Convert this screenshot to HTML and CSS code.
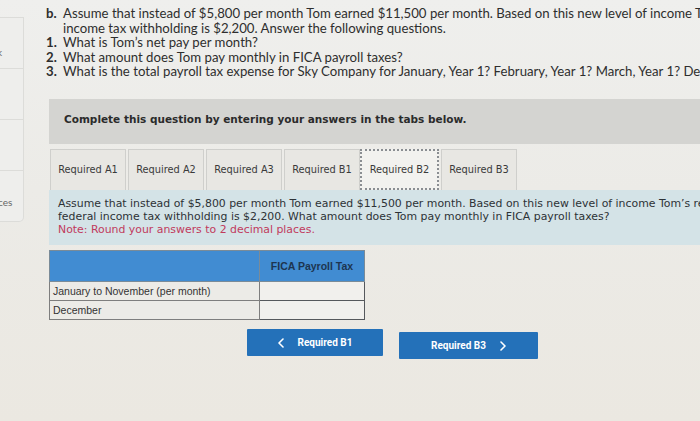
FILE: index.html
```html
<!DOCTYPE html>
<html>
<head>
<meta charset="utf-8">
<link rel="stylesheet" href="styles.css">
</head>
<body>
<div class="page">
  <aside class="side">
    <div class="side-item"><span class="side-x">k</span></div>
    <div class="side-item"></div>
    <div class="side-item"></div>
    <div class="side-item side-last"><span class="side-ces">ces</span></div>
  </aside>
  <main class="main">
    <div class="question">
      <div class="qrow"><span class="mark">b.</span><span class="qtext"><span class="line">Assume that instead of $5,800 per month Tom earned $11,500 per month. Based on this new level of income Tom's federal</span><span class="line">income tax withholding is $2,200. Answer the following questions.</span></span></div>
      <div class="qrow"><span class="mark num">1.</span><span class="qtext">What is Tom’s net pay per month?</span></div>
      <div class="qrow"><span class="mark num">2.</span><span class="qtext">What amount does Tom pay monthly in FICA payroll taxes?</span></div>
      <div class="qrow"><span class="mark num">3.</span><span class="qtext line">What is the total payroll tax expense for Sky Company for January, Year 1? February, Year 1? March, Year 1? December, Year 1?</span></div>
    </div>

    <div class="banner">Complete this question by entering your answers in the tabs below.</div>

    <div class="tabs">
      <div class="tab">Required A1</div>
      <div class="tab">Required A2</div>
      <div class="tab">Required A3</div>
      <div class="tab">Required B1</div>
      <div class="tab active">Required B2</div>
      <div class="tab">Required B3</div>
    </div>

    <div class="prompt">
      <p class="line">Assume that instead of $5,800 per month Tom earned $11,500 per month. Based on this new level of income Tom’s regular</p>
      <p class="line">federal income tax withholding is $2,200. What amount does Tom pay monthly in FICA payroll taxes?</p>
      <p class="note">Note: Round your answers to 2 decimal places.</p>
    </div>

    <table class="grid">
      <tr class="head">
        <th class="label-col"></th>
        <th class="val-col">FICA Payroll Tax</th>
      </tr>
      <tr>
        <td class="label">January to November (per month)</td>
        <td class="input"></td>
      </tr>
      <tr>
        <td class="label">December</td>
        <td class="input"></td>
      </tr>
    </table>

    <div class="nav">
      <button class="btn prev"><svg class="chev" width="6" height="10" viewBox="0 0 6 10"><path d="M5 1 L1 5 L5 9" fill="none" stroke="#fff" stroke-width="1.6" stroke-linecap="round" stroke-linejoin="round"/></svg>Required B1</button>
      <button class="btn next">Required B3<svg class="chev" width="6" height="10" viewBox="0 0 6 10"><path d="M1 1 L5 5 L1 9" fill="none" stroke="#fff" stroke-width="1.6" stroke-linecap="round" stroke-linejoin="round"/></svg></button>
    </div>
  </main>
</div>
</body>
</html>
```
FILE: styles.css
```css
html, body {
  margin: 0;
  padding: 0;
}
body {
  width: 700px;
  height: 421px;
  overflow: hidden;
  background: linear-gradient(180deg, #efefed 0%, #ecebe7 45%, #ebe8e1 100%);
}
.page {
  display: flex;
  align-items: flex-start;
}
.side {
  width: 23px;
  margin-top: 17px;
  flex: none;
  border: 1px solid #dcdcd9;
  border-left: none;
  border-radius: 0 0 5px 0;
  background: #eeeeec;
  display: flex;
  flex-direction: column;
  overflow: hidden;
}
.side-item {
  height: 50px;
  border-bottom: 1px solid #dcdcd9;
  font-family: "Lato", sans-serif;
  font-size: 10px;
  color: #666;
  display: flex;
  align-items: center;
}
.side-last {
  border-bottom: none;
}
.side-x {
  margin-left: -3px;
  margin-top: 18px;
}
.side-ces {
  margin-left: -2px;
  margin-top: 12px;
}
.main {
  flex: 1;
  min-width: 0;
  margin-left: 22px;
  margin-right: -40px;
}
.question {
  font-family: "Lato", sans-serif;
  font-size: 13.2px;
  line-height: 14.6px;
  color: #2e2e2e;
  padding-top: 6px;
  overflow: hidden;
}
.qrow {
  display: flex;
}
.mark {
  width: 17px;
  flex: none;
  font-weight: 700;
}
.qtext {
  flex: 1;
  min-width: 0;
}
.line {
  display: block;
  white-space: nowrap;
}
.banner {
  margin-top: 20px;
  margin-left: 3px;
  height: 45px;
  background: #d4d4d1;
  font-family: "DejaVu Sans", sans-serif;
  font-weight: 700;
  font-size: 10.5px;
  color: #2b2b2b;
  display: flex;
  align-items: center;
  padding-left: 15px;
  padding-bottom: 4px;
  box-sizing: border-box;
}
.tabs {
  margin-top: 5px;
  margin-left: 4px;
  display: flex;
  height: 41px;
}
.tab {
  width: 76px;
  margin-right: 2px;
  box-sizing: border-box;
  border: 1px solid #cfcfcc;
  border-bottom: none;
  background: #e8e7e3;
  font-family: "DejaVu Sans", sans-serif;
  font-size: 9.8px;
  color: #3a3a3a;
  display: flex;
  align-items: center;
  justify-content: center;
}
.tab.active {
  background: #f2f2ef;
  border: 2px dotted #8a8e92;
  width: 79px;
  margin-left: -2px;
}
.prompt {
  margin-left: 3px;
  background: #d4e3e7;
  padding: 8px 0 9px 9px;
  font-family: "DejaVu Sans", sans-serif;
  font-size: 10.9px;
  line-height: 12.8px;
  color: #2d3236;
  overflow: hidden;
}
.prompt p {
  margin: 0;
}
.note {
  color: #c13a5c;
}
.grid {
  margin-top: 5px;
  margin-left: 3px;
  border-collapse: collapse;
  font-family: "Liberation Sans", sans-serif;
}
.grid th, .grid td {
  padding: 0;
}
.head th {
  background: #418cd2;
  height: 30px;
  border: 1px solid #7a8b98;
}
.label-col {
  width: 209px;
}
.val-col {
  width: 104px;
  font-size: 10.5px;
  font-weight: 700;
  color: #1d3550;
  vertical-align: middle;
  border-left: 1px solid #d9e4ec !important;
}
.label {
  height: 18px;
  border: 1px solid #7e7e7e;
  background: #ecebe7;
  font-size: 10.5px;
  color: #333;
  padding-left: 3px !important;
}
.input {
  border: 1.5px solid #55585c;
  background: #f1f0ed;
}
.nav {
  display: flex;
  margin-top: 9px;
  margin-left: 201px;
  gap: 16px;
  align-items: flex-start;
}
.btn {
  border: none;
  border-radius: 1px;
  background: #2471b9;
  color: #fff;
  font-family: "Roboto", sans-serif;
  font-weight: 700;
  font-size: 10px;
  height: 27px;
  padding: 0;
  display: flex;
  align-items: center;
  justify-content: center;
}
.prev {
  width: 136px;
}
.next {
  width: 139px;
  margin-top: 3px;
}
.prev .chev {
  margin-right: 14px;
}
.next .chev {
  margin-left: 14px;
}
```
